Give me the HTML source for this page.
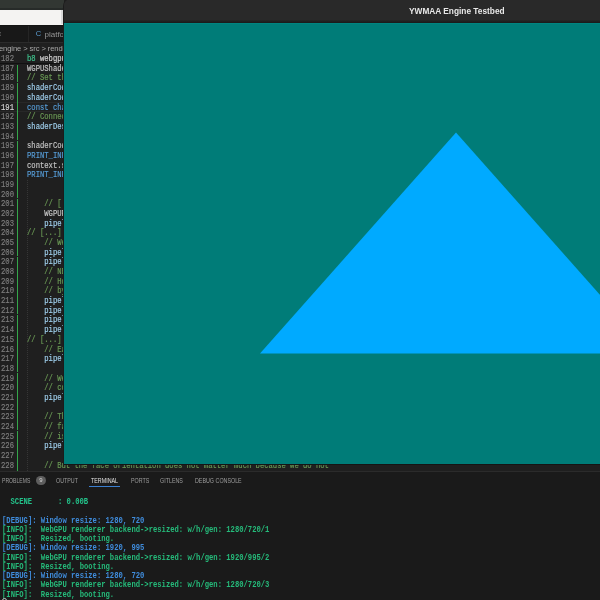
<!DOCTYPE html>
<html><head><meta charset="utf-8">
<style>
html,body{margin:0;padding:0;width:600px;height:600px;overflow:hidden;background:#1f1f1f;}
body{position:relative;font-family:"Liberation Sans",sans-serif;}
#wrap{position:absolute;left:0;top:0;width:600px;height:600px;will-change:transform;}
#topbar{position:absolute;left:0;top:0;width:64px;height:8px;background:#323733;}
#topline{position:absolute;left:0;top:8px;width:64px;height:2px;background:#272b29;}
#whitebar{position:absolute;left:0;top:10px;width:63px;height:14.7px;background:#f4f3f2;}
#whiteedge{position:absolute;left:61px;top:10px;width:2px;height:14px;background:#d8d8d8;}
#blackline{position:absolute;left:0;top:24.7px;width:64px;height:1.3px;background:#141414;}
#tabs{position:absolute;left:0;top:26px;width:64px;height:15.5px;background:#181818;}
#tab2{position:absolute;left:28px;top:26px;width:36px;height:15.5px;background:#181818;border-left:1px solid #252525;}
#tabsb{position:absolute;left:0;top:41.5px;width:64px;height:1px;background:#2b2b2b;}
.sans{font-family:"Liberation Sans",sans-serif;white-space:nowrap;position:absolute;}
.ln{position:absolute;left:0;width:14px;text-align:right;font-family:"Liberation Mono",monospace;font-size:7.2px;line-height:9.68px;color:#7e7e7e;white-space:pre;transform-origin:0 6.76px;transform:scaleY(1.15);-webkit-text-stroke:0.15px currentColor;}
.ln.cur{color:#d6d6d6;}
.cl{position:absolute;font-family:"Liberation Mono",monospace;font-size:7.2px;line-height:9.68px;white-space:pre;transform-origin:0 6.76px;transform:scaleY(1.15);-webkit-text-stroke:0.15px currentColor;}
.gut{position:absolute;left:16.6px;width:1.7px;background:#34a64a;}
#ind{position:absolute;left:27.4px;top:180px;width:0;height:291px;border-left:1px dotted #363636;}
#curline{position:absolute;left:0;top:101.5px;width:64px;height:8.6px;border-top:1px solid #282828;border-bottom:1px solid #282828;}
#sticky{position:absolute;left:0;top:54px;width:64px;height:9px;background:#1f1f1f;}
#stickysh{position:absolute;left:0;top:63px;width:64px;height:1px;background:#111;}
#panel{position:absolute;left:0;top:471px;width:600px;height:128.5px;background:#1a1a1a;border-top:1px solid #2b2b2b;}
.pt{position:absolute;top:477px;font-size:6.3px;line-height:8px;color:#9d9d9d;transform-origin:0 0;transform:scaleX(0.85);white-space:nowrap;}
#badge{position:absolute;left:36px;top:475.8px;width:9.6px;height:9.6px;border-radius:50%;background:#5e5e5e;color:#d8d8d8;font-size:6px;line-height:9.6px;text-align:center;}
#tul{position:absolute;left:89.3px;top:485.8px;width:31px;height:1px;background:#3b7fd0;}
.tl{position:absolute;left:2px;font-family:"Liberation Mono",monospace;font-weight:bold;font-size:7.2px;line-height:9.27px;white-space:pre;transform-origin:0 50%;transform:scaleY(1.15);}
.dbg{color:#3f8cdc;}
.inf{color:#25ba7a;}
#scene{position:absolute;left:10.5px;top:498.3px;font-family:"Liberation Mono",monospace;font-weight:bold;font-size:7.2px;line-height:9.27px;white-space:pre;color:#23c28a;transform-origin:0 50%;transform:scaleY(1.15);}
#win{position:absolute;left:63px;top:-1.25px;width:800px;height:465.25px;background:#1b1b1b;border-top-left-radius:7px;overflow:hidden;}
#teal{position:absolute;left:1px;top:23.75px;width:800px;height:441.5px;background:#007c78;border-top:1px solid #008480;}
#title{position:absolute;left:1px;top:0.6px;width:100%;height:23.15px;background:linear-gradient(to bottom,#292929 0,#292929 20.6px,#1c1c1c 23.15px);border-top-left-radius:6.3px;}
#ttext{position:absolute;left:345px;top:6.75px;font-weight:bold;font-size:8.8px;line-height:10px;color:#e8e8e8;white-space:nowrap;transform-origin:0 0;transform:scaleX(0.945);}
</style></head><body><div id="wrap">
<div id="topbar"></div><div id="topline"></div>
<div id="whitebar"></div>
<div id="whiteedge"></div>
<div id="blackline"></div>
<div id="tabs"></div>
<div id="tab2"></div>
<div id="tabsb"></div>
<div class="sans" style="left:35.8px;top:29.5px;font-size:7.6px;line-height:8px;color:#5a9bd0;">C</div>
<div class="sans" style="left:-2.5px;top:29.5px;font-size:7px;line-height:8px;color:#8a8a8a;">c</div>
<div class="sans" style="left:44.5px;top:29.5px;font-size:8px;line-height:10px;color:#969696;">platform</div>
<div class="sans" style="left:-1px;top:43.5px;font-size:7.6px;line-height:10px;color:#a9a9a9;letter-spacing:-0.1px;">engine &gt; src &gt; renderer</div>
<div id="sticky"></div>
<div class="ln" style="top:54.9px">182</div>
<div class="cl" style="top:54.9px;left:27px"><span style="color:#3fc48e">b8</span> <span style="color:#d4d4d4">webgpu</span></div>
<div id="stickysh"></div>
<div id="curline"></div>
<div class="gut" style="top:64.50px;height:17.46px"></div>
<div class="gut" style="top:82.86px;height:57.18px"></div>
<div class="gut" style="top:140.94px;height:57.18px"></div>
<div class="gut" style="top:199.02px;height:57.18px"></div>
<div class="gut" style="top:257.10px;height:57.18px"></div>
<div class="gut" style="top:315.18px;height:57.18px"></div>
<div class="gut" style="top:373.26px;height:57.18px"></div>
<div class="gut" style="top:431.34px;height:39.66px"></div>
<div id="ind"></div>
<div class="ln" style="top:64.80px">187</div>
<div class="cl" style="top:64.80px;left:27.00px"><span style="color:#c4c4c4">WGPUShaderModuleDescriptor</span></div>
<div class="ln" style="top:74.48px">188</div>
<div class="cl" style="top:74.48px;left:27.00px"><span style="color:#6a9955">// Set the source code</span></div>
<div class="ln" style="top:84.16px">189</div>
<div class="cl" style="top:84.16px;left:27.00px"><span style="color:#a0d0ee">shaderCodeDesc</span></div>
<div class="ln" style="top:93.84px">190</div>
<div class="cl" style="top:93.84px;left:27.00px"><span style="color:#a0d0ee">shaderCodeDesc</span></div>
<div class="ln cur" style="top:103.52px">191</div>
<div class="cl" style="top:103.52px;left:27.00px"><span style="color:#569cd6">const char*</span></div>
<div class="ln" style="top:113.20px">192</div>
<div class="cl" style="top:113.20px;left:27.00px"><span style="color:#6a9955">// Connect the chain</span></div>
<div class="ln" style="top:122.88px">193</div>
<div class="cl" style="top:122.88px;left:27.00px"><span style="color:#a0d0ee">shaderDesc</span></div>
<div class="ln" style="top:132.56px">194</div>
<div class="ln" style="top:142.24px">195</div>
<div class="cl" style="top:142.24px;left:27.00px"><span style="color:#c4c4c4">shaderCodeDesc</span></div>
<div class="ln" style="top:151.92px">196</div>
<div class="cl" style="top:151.92px;left:27.00px"><span style="color:#569cd6">PRINT_INFO</span></div>
<div class="ln" style="top:161.60px">197</div>
<div class="cl" style="top:161.60px;left:27.00px"><span style="color:#c4c4c4">context.shader</span></div>
<div class="ln" style="top:171.28px">198</div>
<div class="cl" style="top:171.28px;left:27.00px"><span style="color:#569cd6">PRINT_INFO</span></div>
<div class="ln" style="top:180.96px">199</div>
<div class="ln" style="top:190.64px">200</div>
<div class="ln" style="top:200.32px">201</div>
<div class="cl" style="top:200.32px;left:44.28px"><span style="color:#6a9955">// [...]</span></div>
<div class="ln" style="top:210.00px">202</div>
<div class="cl" style="top:210.00px;left:44.28px"><span style="color:#c4c4c4">WGPURenderPipeline</span></div>
<div class="ln" style="top:219.68px">203</div>
<div class="cl" style="top:219.68px;left:44.28px"><span style="color:#a0d0ee">pipelineDesc</span></div>
<div class="ln" style="top:229.36px">204</div>
<div class="cl" style="top:229.36px;left:27.00px"><span style="color:#6a9955">// [...]</span></div>
<div class="ln" style="top:239.04px">205</div>
<div class="cl" style="top:239.04px;left:44.28px"><span style="color:#6a9955">// We use</span></div>
<div class="ln" style="top:248.72px">206</div>
<div class="cl" style="top:248.72px;left:44.28px"><span style="color:#a0d0ee">pipelineDesc</span></div>
<div class="ln" style="top:258.40px">207</div>
<div class="cl" style="top:258.40px;left:44.28px"><span style="color:#a0d0ee">pipelineDesc</span></div>
<div class="ln" style="top:268.08px">208</div>
<div class="cl" style="top:268.08px;left:44.28px"><span style="color:#6a9955">// NB</span></div>
<div class="ln" style="top:277.76px">209</div>
<div class="cl" style="top:277.76px;left:44.28px"><span style="color:#6a9955">// How</span></div>
<div class="ln" style="top:287.44px">210</div>
<div class="cl" style="top:287.44px;left:44.28px"><span style="color:#6a9955">// by</span></div>
<div class="ln" style="top:297.12px">211</div>
<div class="cl" style="top:297.12px;left:44.28px"><span style="color:#a0d0ee">pipelineDesc</span></div>
<div class="ln" style="top:306.80px">212</div>
<div class="cl" style="top:306.80px;left:44.28px"><span style="color:#a0d0ee">pipelineDesc</span></div>
<div class="ln" style="top:316.48px">213</div>
<div class="cl" style="top:316.48px;left:44.28px"><span style="color:#a0d0ee">pipelineDesc</span></div>
<div class="ln" style="top:326.16px">214</div>
<div class="cl" style="top:326.16px;left:44.28px"><span style="color:#a0d0ee">pipelineDesc</span></div>
<div class="ln" style="top:335.84px">215</div>
<div class="cl" style="top:335.84px;left:27.00px"><span style="color:#6a9955">// [...]</span></div>
<div class="ln" style="top:345.52px">216</div>
<div class="cl" style="top:345.52px;left:44.28px"><span style="color:#6a9955">// Each</span></div>
<div class="ln" style="top:355.20px">217</div>
<div class="cl" style="top:355.20px;left:44.28px"><span style="color:#a0d0ee">pipelineDesc</span></div>
<div class="ln" style="top:364.88px">218</div>
<div class="ln" style="top:374.56px">219</div>
<div class="cl" style="top:374.56px;left:44.28px"><span style="color:#6a9955">// We</span></div>
<div class="ln" style="top:384.24px">220</div>
<div class="cl" style="top:384.24px;left:44.28px"><span style="color:#6a9955">// could</span></div>
<div class="ln" style="top:393.92px">221</div>
<div class="cl" style="top:393.92px;left:44.28px"><span style="color:#a0d0ee">pipelineDesc</span></div>
<div class="ln" style="top:403.60px">222</div>
<div class="ln" style="top:413.28px">223</div>
<div class="cl" style="top:413.28px;left:44.28px"><span style="color:#6a9955">// The</span></div>
<div class="ln" style="top:422.96px">224</div>
<div class="cl" style="top:422.96px;left:44.28px"><span style="color:#6a9955">// face</span></div>
<div class="ln" style="top:432.64px">225</div>
<div class="cl" style="top:432.64px;left:44.28px"><span style="color:#6a9955">// is</span></div>
<div class="ln" style="top:442.32px">226</div>
<div class="cl" style="top:442.32px;left:44.28px"><span style="color:#a0d0ee">pipelineDesc</span></div>
<div class="ln" style="top:452.00px">227</div>
<div class="ln" style="top:461.68px">228</div>
<div class="cl" style="top:461.68px;left:44.28px"><span style="color:#6a9955">// But the face orientation does not matter much because we do not</span></div>
<div id="panel"></div>
<div class="pt" style="left:2px;transform:scaleX(0.81);">PROBLEMS</div>
<div id="badge">9</div>
<div class="pt" style="left:56px;">OUTPUT</div>
<div class="pt" style="left:90.8px;color:#e0e0e0;">TERMINAL</div>
<div id="tul"></div>
<div class="pt" style="left:131px;">PORTS</div>
<div class="pt" style="left:160.2px;">GITLENS</div>
<div class="pt" style="left:194.8px;">DEBUG CONSOLE</div>
<div id="scene">SCENE      : 0.00B</div>
<div class="tl dbg" style="top:516.60px">[DEBUG]: Window resize: 1280, 720</div>
<div class="tl inf" style="top:525.87px">[INFO]:  WebGPU renderer backend->resized: w/h/gen: 1280/720/1</div>
<div class="tl inf" style="top:535.14px">[INFO]:  Resized, booting.</div>
<div class="tl dbg" style="top:544.41px">[DEBUG]: Window resize: 1920, 995</div>
<div class="tl inf" style="top:553.68px">[INFO]:  WebGPU renderer backend->resized: w/h/gen: 1920/995/2</div>
<div class="tl inf" style="top:562.95px">[INFO]:  Resized, booting.</div>
<div class="tl dbg" style="top:572.22px">[DEBUG]: Window resize: 1280, 720</div>
<div class="tl inf" style="top:581.49px">[INFO]:  WebGPU renderer backend->resized: w/h/gen: 1280/720/3</div>
<div class="tl inf" style="top:590.76px">[INFO]:  Resized, booting.</div>
<div style="position:absolute;left:1.6px;top:597.6px;width:3.6px;height:3.6px;border:1.1px solid #b8b8b8;border-radius:50%;"></div>
<div style="position:absolute;left:64px;top:464px;width:536px;height:1.2px;background:#151515;"></div>
<div id="win">
  <div id="teal"></div><div id="title"><div id="ttext">YWMAA Engine Testbed</div></div>
  <svg width="800" height="464" style="position:absolute;left:1px;top:1.25px">
    <polygon points="392,132.5 196,353.5 588,353.5" fill="#00aaff"/>
  </svg>
</div>
</div></body></html>
